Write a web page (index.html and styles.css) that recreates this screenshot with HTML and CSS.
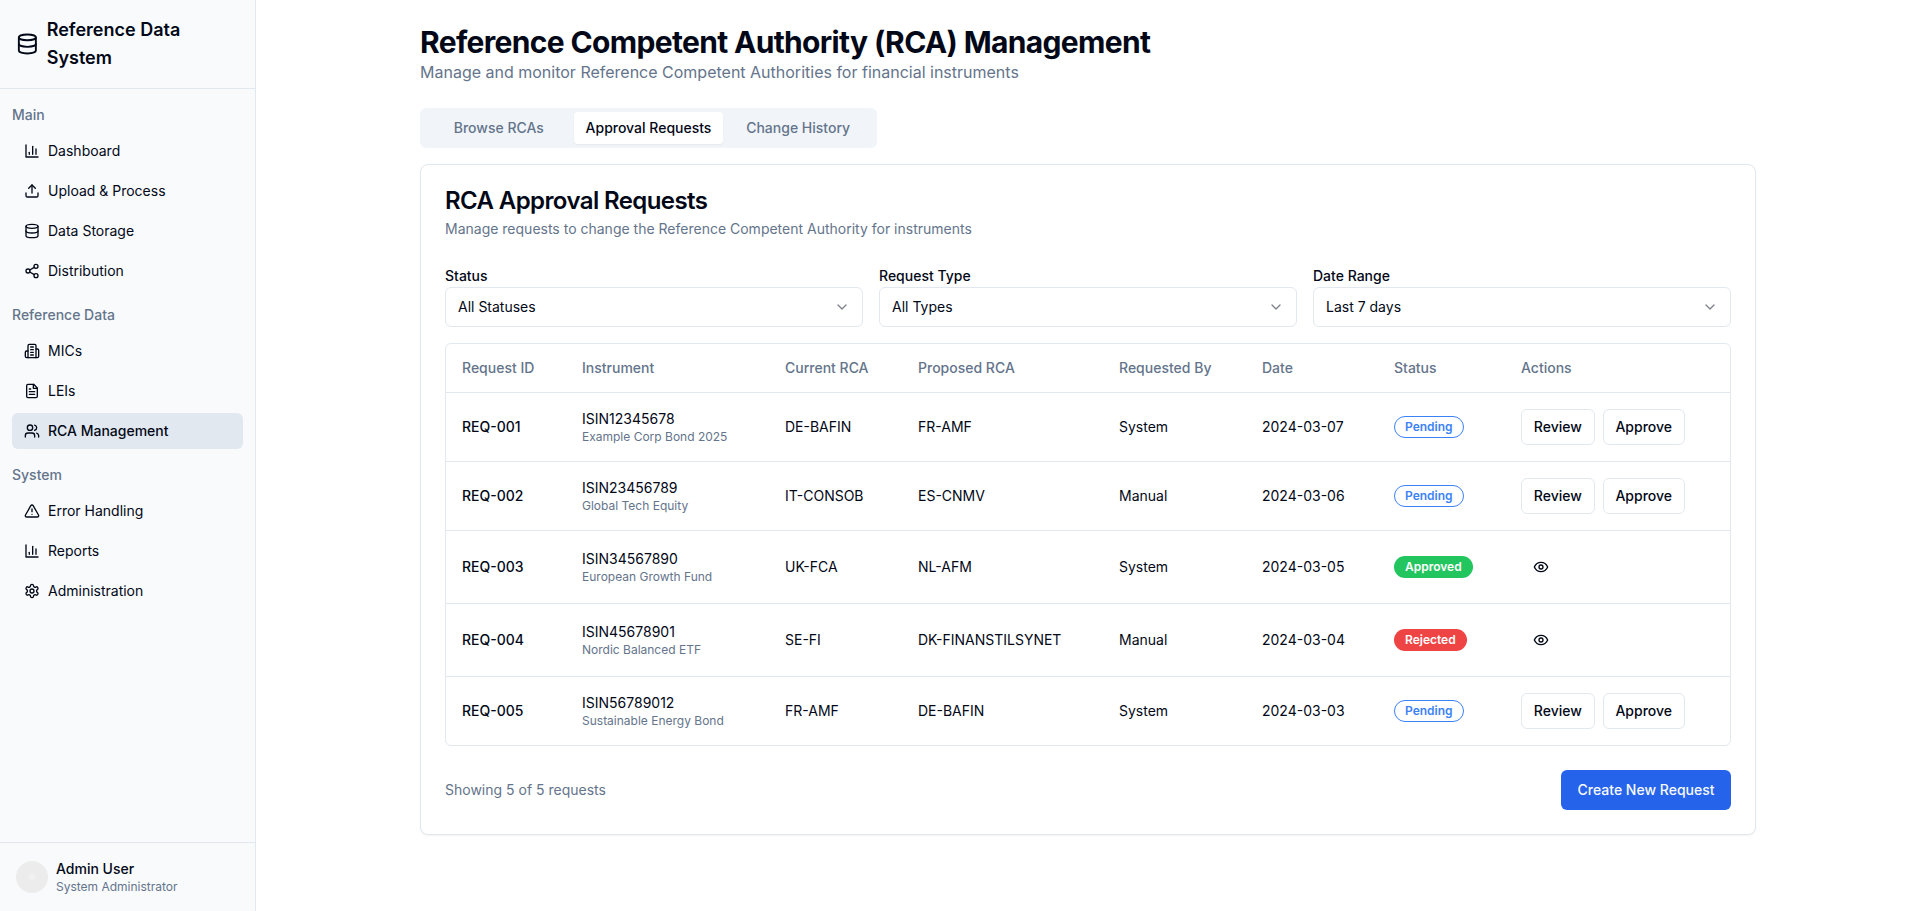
FILE: index.html
```html
<!DOCTYPE html>
<html lang="en">
<head>
    <meta charset="UTF-8">
    <meta name="viewport" content="width=device-width, initial-scale=1.0">
    <title>Reference Competent Authority (RCA) Management</title>
    <link rel="stylesheet" href="styles.css">
</head>
<body>
    <svg class="sprite" aria-hidden="true">
        <symbol id="i-database" viewBox="0 0 24 24"><ellipse cx="12" cy="5" rx="9" ry="3"/><path d="M3 5V19A9 3 0 0 0 21 19V5"/><path d="M3 12A9 3 0 0 0 21 12"/></symbol>
        <symbol id="i-chart" viewBox="0 0 24 24"><path d="M3 3v18h18"/><path d="M18 17V9"/><path d="M13 17V5"/><path d="M8 17v-3"/></symbol>
        <symbol id="i-upload" viewBox="0 0 24 24"><path d="M21 15v4a2 2 0 0 1-2 2H5a2 2 0 0 1-2-2v-4"/><polyline points="17 8 12 3 7 8"/><line x1="12" x2="12" y1="3" y2="15"/></symbol>
        <symbol id="i-share" viewBox="0 0 24 24"><circle cx="18" cy="5" r="3"/><circle cx="6" cy="12" r="3"/><circle cx="18" cy="19" r="3"/><line x1="8.59" x2="15.42" y1="13.51" y2="17.49"/><line x1="15.41" x2="8.59" y1="6.51" y2="10.49"/></symbol>
        <symbol id="i-building" viewBox="0 0 24 24"><path d="M6 22V4a2 2 0 0 1 2-2h8a2 2 0 0 1 2 2v18Z"/><path d="M6 12H4a2 2 0 0 0-2 2v6a2 2 0 0 0 2 2h2"/><path d="M18 9h2a2 2 0 0 1 2 2v9a2 2 0 0 1-2 2h-2"/><path d="M10 6h4"/><path d="M10 10h4"/><path d="M10 14h4"/><path d="M10 18h4"/></symbol>
        <symbol id="i-file" viewBox="0 0 24 24"><path d="M14.5 2H6a2 2 0 0 0-2 2v16a2 2 0 0 0 2 2h12a2 2 0 0 0 2-2V7.5L14.5 2z"/><polyline points="14 2 14 8 20 8"/><line x1="16" x2="8" y1="13" y2="13"/><line x1="16" x2="8" y1="17" y2="17"/><line x1="10" x2="8" y1="9" y2="9"/></symbol>
        <symbol id="i-users" viewBox="0 0 24 24"><path d="M16 21v-2a4 4 0 0 0-4-4H6a4 4 0 0 0-4 4v2"/><circle cx="9" cy="7" r="4"/><path d="M22 21v-2a4 4 0 0 0-3-3.87"/><path d="M16 3.13a4 4 0 0 1 0 7.75"/></symbol>
        <symbol id="i-alert" viewBox="0 0 24 24"><path d="m21.73 18-8-14a2 2 0 0 0-3.48 0l-8 14A2 2 0 0 0 4 21h16a2 2 0 0 0 1.73-3Z"/><path d="M12 9v4"/><path d="M12 17h.01"/></symbol>
        <symbol id="i-settings" viewBox="0 0 24 24"><path d="M12.22 2h-.44a2 2 0 0 0-2 2v.18a2 2 0 0 1-1 1.73l-.43.25a2 2 0 0 1-2 0l-.15-.08a2 2 0 0 0-2.73.73l-.22.38a2 2 0 0 0 .73 2.73l.15.1a2 2 0 0 1 1 1.72v.51a2 2 0 0 1-1 1.74l-.15.09a2 2 0 0 0-.73 2.73l.22.38a2 2 0 0 0 2.73.73l.15-.08a2 2 0 0 1 2 0l.43.25a2 2 0 0 1 1 1.73V20a2 2 0 0 0 2 2h.44a2 2 0 0 0 2-2v-.18a2 2 0 0 1 1-1.73l.43-.25a2 2 0 0 1 2 0l.15.08a2 2 0 0 0 2.73-.73l.22-.39a2 2 0 0 0-.73-2.73l-.15-.08a2 2 0 0 1-1-1.74v-.5a2 2 0 0 1 1-1.74l.15-.09a2 2 0 0 0 .73-2.73l-.22-.38a2 2 0 0 0-2.73-.73l-.15.08a2 2 0 0 1-2 0l-.43-.25a2 2 0 0 1-1-1.73V4a2 2 0 0 0-2-2z"/><circle cx="12" cy="12" r="3"/></symbol>
        <symbol id="i-eye" viewBox="0 0 24 24"><path d="M2 12s3-7 10-7 10 7 10 7-3 7-10 7-10-7-10-7Z"/><circle cx="12" cy="12" r="3"/></symbol>
        <symbol id="i-chevron" viewBox="0 0 24 24"><path d="m6 9 6 6 6-6"/></symbol>
    </svg>

    <div class="layout">
        <aside class="sidebar">
            <div class="brand">
                <svg class="icon icon-lg"><use href="#i-database"/></svg>
                <span class="brand-name">Reference Data System</span>
            </div>

            <nav class="nav">
                <div class="nav-group">
                    <div class="nav-label">Main</div>
                    <a class="nav-item" href="#"><svg class="icon"><use href="#i-chart"/></svg>Dashboard</a>
                    <a class="nav-item" href="#"><svg class="icon"><use href="#i-upload"/></svg>Upload &amp; Process</a>
                    <a class="nav-item" href="#"><svg class="icon"><use href="#i-database"/></svg>Data Storage</a>
                    <a class="nav-item" href="#"><svg class="icon"><use href="#i-share"/></svg>Distribution</a>
                </div>
                <div class="nav-group">
                    <div class="nav-label">Reference Data</div>
                    <a class="nav-item" href="#"><svg class="icon"><use href="#i-building"/></svg>MICs</a>
                    <a class="nav-item" href="#"><svg class="icon"><use href="#i-file"/></svg>LEIs</a>
                    <a class="nav-item active" href="#"><svg class="icon"><use href="#i-users"/></svg>RCA Management</a>
                </div>
                <div class="nav-group">
                    <div class="nav-label">System</div>
                    <a class="nav-item" href="#"><svg class="icon"><use href="#i-alert"/></svg>Error Handling</a>
                    <a class="nav-item" href="#"><svg class="icon"><use href="#i-chart"/></svg>Reports</a>
                    <a class="nav-item" href="#"><svg class="icon"><use href="#i-settings"/></svg>Administration</a>
                </div>
            </nav>

            <div class="user">
                <div class="avatar"></div>
                <div>
                    <div class="user-name">Admin User</div>
                    <div class="user-role">System Administrator</div>
                </div>
            </div>
        </aside>

        <main class="main">
            <div class="content">
                <h1>Reference Competent Authority (RCA) Management</h1>
                <p class="subtitle">Manage and monitor Reference Competent Authorities for financial instruments</p>

                <div class="tabs">
                    <button type="button" class="tab">Browse RCAs</button>
                    <button type="button" class="tab active">Approval Requests</button>
                    <button type="button" class="tab">Change History</button>
                </div>

                <section class="card">
                    <h2>RCA Approval Requests</h2>
                    <p class="card-desc">Manage requests to change the Reference Competent Authority for instruments</p>

                    <div class="filters">
                        <div class="filter">
                            <label>Status</label>
                            <button type="button" class="select"><span>All Statuses</span><svg class="icon chevron"><use href="#i-chevron"/></svg></button>
                        </div>
                        <div class="filter">
                            <label>Request Type</label>
                            <button type="button" class="select"><span>All Types</span><svg class="icon chevron"><use href="#i-chevron"/></svg></button>
                        </div>
                        <div class="filter">
                            <label>Date Range</label>
                            <button type="button" class="select"><span>Last 7 days</span><svg class="icon chevron"><use href="#i-chevron"/></svg></button>
                        </div>
                    </div>

                    <div class="table-wrap">
                        <table>
                            <colgroup>
                                <col class="col-id"><col class="col-inst"><col class="col-cur"><col class="col-prop"><col class="col-by"><col class="col-date"><col class="col-status"><col>
                            </colgroup>
                            <thead>
                                <tr>
                                    <th>Request ID</th>
                                    <th>Instrument</th>
                                    <th>Current RCA</th>
                                    <th>Proposed RCA</th>
                                    <th>Requested By</th>
                                    <th>Date</th>
                                    <th>Status</th>
                                    <th>Actions</th>
                                </tr>
                            </thead>
                            <tbody>
                                <tr>
                                    <td class="req-id">REQ-001</td>
                                    <td><div>ISIN12345678</div><div class="inst-name">Example Corp Bond 2025</div></td>
                                    <td>DE-BAFIN</td>
                                    <td>FR-AMF</td>
                                    <td>System</td>
                                    <td>2024-03-07</td>
                                    <td><span class="badge pending">Pending</span></td>
                                    <td><div class="actions"><button type="button" class="btn">Review</button><button type="button" class="btn">Approve</button></div></td>
                                </tr>
                                <tr>
                                    <td class="req-id">REQ-002</td>
                                    <td><div>ISIN23456789</div><div class="inst-name">Global Tech Equity</div></td>
                                    <td>IT-CONSOB</td>
                                    <td>ES-CNMV</td>
                                    <td>Manual</td>
                                    <td>2024-03-06</td>
                                    <td><span class="badge pending">Pending</span></td>
                                    <td><div class="actions"><button type="button" class="btn">Review</button><button type="button" class="btn">Approve</button></div></td>
                                </tr>
                                <tr>
                                    <td class="req-id">REQ-003</td>
                                    <td><div>ISIN34567890</div><div class="inst-name">European Growth Fund</div></td>
                                    <td>UK-FCA</td>
                                    <td>NL-AFM</td>
                                    <td>System</td>
                                    <td>2024-03-05</td>
                                    <td><span class="badge approved">Approved</span></td>
                                    <td><button type="button" class="icon-btn" aria-label="View"><svg class="icon"><use href="#i-eye"/></svg></button></td>
                                </tr>
                                <tr>
                                    <td class="req-id">REQ-004</td>
                                    <td><div>ISIN45678901</div><div class="inst-name">Nordic Balanced ETF</div></td>
                                    <td>SE-FI</td>
                                    <td>DK-FINANSTILSYNET</td>
                                    <td>Manual</td>
                                    <td>2024-03-04</td>
                                    <td><span class="badge rejected">Rejected</span></td>
                                    <td><button type="button" class="icon-btn" aria-label="View"><svg class="icon"><use href="#i-eye"/></svg></button></td>
                                </tr>
                                <tr>
                                    <td class="req-id">REQ-005</td>
                                    <td><div>ISIN56789012</div><div class="inst-name">Sustainable Energy Bond</div></td>
                                    <td>FR-AMF</td>
                                    <td>DE-BAFIN</td>
                                    <td>System</td>
                                    <td>2024-03-03</td>
                                    <td><span class="badge pending">Pending</span></td>
                                    <td><div class="actions"><button type="button" class="btn">Review</button><button type="button" class="btn">Approve</button></div></td>
                                </tr>
                            </tbody>
                        </table>
                    </div>

                    <div class="card-foot">
                        <span class="count">Showing 5 of 5 requests</span>
                        <button type="button" class="btn-primary">Create New Request</button>
                    </div>
                </section>
            </div>
        </main>
    </div>
</body>
</html>
```

FILE: styles.css
```css
* {
  margin: 0;
  padding: 0;
  box-sizing: border-box;
}

body {
  font-family: Inter, "Liberation Sans", sans-serif;
  font-size: 14px;
  line-height: 20px;
  color: #020817;
  background-color: #fff;
}

button {
  font: inherit;
  color: inherit;
  background: none;
  border: none;
}

.sprite {
  display: none;
}

.icon {
  width: 16px;
  height: 16px;
  flex-shrink: 0;
  fill: none;
  stroke: currentColor;
  stroke-width: 2;
  stroke-linecap: round;
  stroke-linejoin: round;
}

.icon-lg {
  width: 24px;
  height: 24px;
  flex-shrink: 1;
}

.layout {
  display: flex;
  height: 911px;
}

/* sidebar */
.sidebar {
  width: 256px;
  flex-shrink: 0;
  display: flex;
  flex-direction: column;
  background-color: #f8fafc;
  border-right: 1px solid #e2e8f0;
}

.brand {
  display: flex;
  align-items: center;
  gap: 8px;
  padding: 16px;
  border-bottom: 1px solid #e2e8f0;
}

.brand-name {
  font-size: 18px;
  line-height: 28px;
  font-weight: 600;
}

.nav {
  flex: 1;
  padding: 16px 12px 0;
  display: flex;
  flex-direction: column;
  gap: 16px;
}

.nav-group {
  display: flex;
  flex-direction: column;
  gap: 4px;
}

.nav-label {
  color: #64748b;
  font-weight: 500;
  margin-bottom: 4px;
}

.nav-item {
  display: flex;
  align-items: center;
  gap: 8px;
  height: 36px;
  padding: 0 12px;
  border-radius: 6px;
  color: #020817;
  text-decoration: none;
}

.nav-item.active {
  background-color: #e2e8f0;
  font-weight: 500;
}

.user {
  display: flex;
  align-items: center;
  gap: 8px;
  padding: 16px;
  border-top: 1px solid #e2e8f0;
}

.avatar {
  width: 32px;
  height: 32px;
  border-radius: 50%;
  background: radial-gradient(circle, #f3f3f3 0, #ececec 5px);
}

.user-name {
  font-weight: 500;
}

.user-role {
  font-size: 12px;
  line-height: 16px;
  color: #64748b;
}

/* main */
.main {
  flex: 1;
  min-width: 0;
  padding: 24px 32px;
}

.content {
  max-width: 1336px;
  margin: 0 auto;
}

h1 {
  font-size: 30px;
  line-height: 36px;
  font-weight: 700;
  letter-spacing: -0.66px;
}

.subtitle {
  font-size: 16px;
  line-height: 24px;
  color: #64748b;
}

.tabs {
  display: inline-grid;
  grid-template-columns: repeat(3, 1fr);
  margin-top: 24px;
  padding: 4px;
  width: 457px;
  height: 40px;
  background-color: #f1f5f9;
  border-radius: 6px;
  vertical-align: top;
}

.tab {
  height: 32px;
  white-space: nowrap;
  font-weight: 500;
  color: #64748b;
  border-radius: 4px;
  cursor: pointer;
}

.tab.active {
  background-color: #fff;
  color: #020817;
  box-shadow: 0 1px 2px rgba(0, 0, 0, 0.05);
}

.card {
  margin-top: 16px;
  padding: 24px;
  border: 1px solid #e2e8f0;
  border-radius: 8px;
  background-color: #fff;
  box-shadow: 0 1px 2px rgba(0, 0, 0, 0.05);
}

h2 {
  font-size: 24px;
  line-height: 24px;
  font-weight: 600;
  letter-spacing: -0.6px;
}

.card-desc {
  margin-top: 6px;
  color: #64748b;
}

.filters {
  display: grid;
  grid-template-columns: repeat(3, 1fr);
  gap: 16px;
  margin-top: 27px;
}

.filter label {
  display: block;
  font-weight: 500;
  margin-bottom: 1px;
}

.select {
  display: flex;
  align-items: center;
  justify-content: space-between;
  width: 100%;
  height: 40px;
  padding: 0 12px;
  border: 1px solid #e2e8f0;
  border-radius: 6px;
  background-color: #fff;
}

.chevron {
  opacity: 0.5;
}

.table-wrap {
  margin-top: 16px;
  border: 1px solid #e2e8f0;
  border-radius: 6px;
  overflow: hidden;
}

table {
  width: 100%;
  border-collapse: separate;
  border-spacing: 0;
  table-layout: fixed;
}

.col-id { width: 120px; }
.col-inst { width: 203px; }
.col-cur { width: 133px; }
.col-prop { width: 201px; }
.col-by { width: 143px; }
.col-date { width: 132px; }
.col-status { width: 127px; }

th {
  height: 49px;
  padding: 0 16px;
  text-align: left;
  font-weight: 500;
  color: #64748b;
  border-bottom: 1px solid #e2e8f0;
}

td {
  padding: 16px;
  vertical-align: middle;
  border-bottom: 1px solid #e2e8f0;
}

tbody tr:last-child td {
  border-bottom: none;
}

.req-id {
  font-weight: 500;
}

.inst-name {
  font-size: 12px;
  line-height: 16px;
  color: #64748b;
}

.badge {
  display: inline-block;
  vertical-align: middle;
  padding: 2px 10px;
  font-size: 12px;
  line-height: 16px;
  font-weight: 600;
  border: 1px solid transparent;
  border-radius: 9999px;
}

.badge.pending {
  color: #3b82f6;
  border-color: #3b82f6;
}

.badge.approved {
  color: #fff;
  background-color: #22c55e;
}

.badge.rejected {
  color: #fff;
  background-color: #ef4444;
}

.actions {
  display: flex;
  gap: 8px;
}

.btn {
  height: 36px;
  padding: 0 11.8px;
  font-weight: 500;
  border: 1px solid #e2e8f0;
  border-radius: 6px;
  background-color: #fff;
  cursor: pointer;
}

.icon-btn {
  display: flex;
  align-items: center;
  justify-content: center;
  width: 40px;
  height: 40px;
  border-radius: 6px;
  cursor: pointer;
}

.card-foot {
  display: flex;
  align-items: center;
  justify-content: space-between;
  margin-top: 24px;
}

.count {
  color: #64748b;
}

.btn-primary {
  height: 40px;
  padding: 0 16.5px;
  font-weight: 500;
  color: #f8fafc;
  background-color: #2563eb;
  border-radius: 6px;
  cursor: pointer;
}
```
